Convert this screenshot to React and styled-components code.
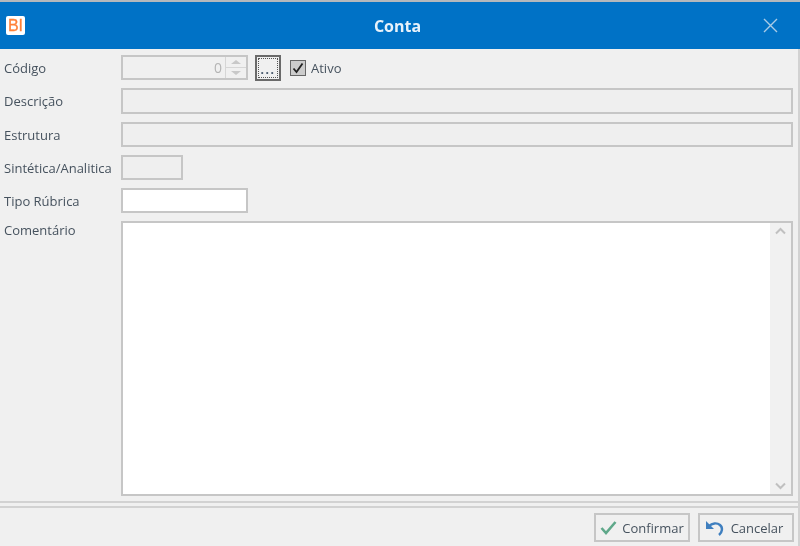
import styled, { createGlobalStyle } from 'styled-components';

const GlobalStyle = createGlobalStyle`
  html, body {
    margin: 0;
    padding: 0;
    background: #f0f0f0;
  }
`;

const Window = styled.div`
  width: 800px;
  height: 546px;
  display: flex;
  flex-direction: column;
  overflow: hidden;
  background: #f0f0f0;
  border-top: 2px solid #b4b8bc;
  box-sizing: border-box;
  font-family: 'Open Sans', 'Noto Sans', sans-serif;
  font-size: 13px;
  color: #46525e;
  filter: blur(0.5px);
`;

const TitleBar = styled.header`
  flex: none;
  height: 47px;
  display: flex;
  align-items: center;
  padding: 0 22px 0 6px;
  background: #0072c6;
`;

const AppLogo = styled.div`
  width: 19px;
  height: 19px;
  display: flex;
  align-items: center;
  justify-content: center;
  background: #fff;
  border-radius: 2px;
  color: #ff8038;
  font-family: 'Liberation Sans', sans-serif;
  font-size: 16px;
  -webkit-text-stroke: 0.3px #ff8038;
`;

const Title = styled.h1`
  flex: 1;
  margin: 0;
  padding-left: 7px;
  text-align: center;
  color: #e8f2fa;
  font-size: 16px;
  font-weight: 700;
  line-height: 20px;
`;

const CloseIcon = styled.svg`
  display: block;
  width: 15px;
  height: 15px;
  stroke: #a9cbe6;
  stroke-width: 1.4;
  fill: none;
`;

const Content = styled.div`
  flex: 1;
  min-height: 0;
  display: flex;
  flex-direction: column;
  border-right: 2px solid #d2d2d2;
`;

const Form = styled.main`
  flex: none;
  height: 452px;
  box-sizing: border-box;
  display: grid;
  grid-template-columns: 121px 1fr;
  grid-template-rows: 25px 26px 25px 25px 25px 1fr;
  gap: 8px 0;
  padding: 6px 5px 5px 0;
`;

const Label = styled.label`
  display: flex;
  align-items: ${(p) => (p.$top ? 'flex-start' : 'center')};
  padding-left: 4px;
  white-space: nowrap;
`;

const Row = styled.div`
  display: flex;
  align-items: center;
`;

const Field = styled.div`
  box-sizing: border-box;
  width: ${(p) => p.$width || '100%'};
  height: 100%;
  border: 2px solid #c6c6c6;
  background: ${(p) => (p.$white ? '#fff' : '#efefef')};
`;

const Spinner = styled.div`
  box-sizing: border-box;
  width: 127px;
  height: 100%;
  display: flex;
  border: 2px solid #c6c6c6;
`;

const SpinValue = styled.div`
  flex: 1;
  display: flex;
  align-items: center;
  justify-content: flex-end;
  padding-right: 3px;
  color: #b4b4b4;
  font-size: 14px;
`;

const SpinButtons = styled.div`
  width: 20px;
  display: flex;
  flex-direction: column;
  border-left: 1px solid #d6d6d6;
`;

const SpinArrow = styled.div`
  flex: 1;
  display: flex;
  align-items: center;
  justify-content: center;

  & + & {
    border-top: 1px solid #d6d6d6;
  }

  &::before {
    content: '';
    border-left: 5px solid transparent;
    border-right: 5px solid transparent;
    ${(p) => (p.$down ? 'border-top' : 'border-bottom')}: 4px solid #c8c8c8;
  }
`;

const BrowseButton = styled.button`
  box-sizing: border-box;
  width: 26px;
  height: 26px;
  margin-left: 7px;
  padding: 0;
  display: flex;
  align-items: flex-end;
  justify-content: center;
  border: 2px solid #6a6a6a;
  outline: 1px dotted #555;
  outline-offset: -4px;
  background: #f0f0f0;
  color: #44566a;
  font-family: inherit;
  font-size: 12px;
  font-weight: 700;
  line-height: 18px;
  letter-spacing: 1.5px;
`;

const CheckWrap = styled.div`
  display: flex;
  align-items: center;
  gap: 5px;
  margin-left: 9px;
`;

const CheckBox = styled.div`
  box-sizing: border-box;
  width: 16px;
  height: 16px;
  display: flex;
  align-items: center;
  justify-content: center;
  border: 1px solid #666;
  background: #cccccc;
`;

const CommentBox = styled.div`
  box-sizing: border-box;
  height: 100%;
  display: flex;
  justify-content: flex-end;
  border: 2px solid #c6c6c6;
  background: #fff;
`;

const ScrollBar = styled.div`
  width: 21px;
  display: flex;
  flex-direction: column;
  justify-content: space-between;
  align-items: center;
  padding: 4px 0;
  background: #f1f1f1;
`;

const ScrollIcon = styled.svg`
  display: block;
  width: 11px;
  height: 8px;
  stroke: #c0c0c0;
  stroke-width: 2;
  fill: none;
`;

const Separator = styled.hr`
  flex: none;
  box-sizing: border-box;
  width: 100%;
  height: 7px;
  margin: 0;
  border: solid #d2d2d2;
  border-width: 2px 0;
`;

const Footer = styled.footer`
  flex: none;
  display: flex;
  justify-content: flex-end;
  gap: 8px;
  padding: 5px 4px 0 0;
`;

const ActionButton = styled.button`
  box-sizing: border-box;
  width: 96px;
  height: 29px;
  display: flex;
  align-items: center;
  justify-content: center;
  gap: ${(p) => p.$gap};
  padding: 0 ${(p) => p.$inset || '0'} 0 0;
  border: 2px solid #c6c6c6;
  background: #f0f0f0;
  color: #46525e;
  font-family: inherit;
  font-size: 13px;
`;

export default function App() {
  return (
    <>
      <GlobalStyle />
      <Window>
        <TitleBar>
          <AppLogo>BI</AppLogo>
          <Title>Conta</Title>
          <CloseIcon viewBox="0 0 15 15">
            <path d="M1 1l13 13M14 1L1 14" />
          </CloseIcon>
        </TitleBar>
        <Content>
          <Form>
            <Label>Código</Label>
            <Row>
              <Spinner>
                <SpinValue>0</SpinValue>
                <SpinButtons>
                  <SpinArrow />
                  <SpinArrow $down />
                </SpinButtons>
              </Spinner>
              <BrowseButton>...</BrowseButton>
              <CheckWrap>
                <CheckBox>
                  <svg width="12" height="12" viewBox="0 0 12 12" fill="none" stroke="#222" strokeWidth="1.8">
                    <path d="M1.5 6.5l3 3.5 6-8.5" />
                  </svg>
                </CheckBox>
                Ativo
              </CheckWrap>
            </Row>
            <Label>Descrição</Label>
            <Field />
            <Label>Estrutura</Label>
            <Field />
            <Label>Sintética/Analitica</Label>
            <Field $width="62px" />
            <Label>Tipo Rúbrica</Label>
            <Field $width="127px" $white />
            <Label $top>Comentário</Label>
            <CommentBox>
              <ScrollBar>
                <ScrollIcon viewBox="0 0 11 8">
                  <path d="M1 6.5l4.5-4.5 4.5 4.5" />
                </ScrollIcon>
                <ScrollIcon viewBox="0 0 11 8">
                  <path d="M1 1.5l4.5 4.5 4.5-4.5" />
                </ScrollIcon>
              </ScrollBar>
            </CommentBox>
          </Form>
          <Separator />
          <Footer>
            <ActionButton $gap="5px">
              <svg width="17" height="15" viewBox="0 0 17 15" fill="none" stroke="#5fa88a" strokeWidth="2.6">
                <path d="M1.5 8l4.5 5L15.5 2" />
              </svg>
              Confirmar
            </ActionButton>
            <ActionButton $gap="7px" $inset="4px">
              <svg width="19" height="16" viewBox="0 0 19 16" fill="none">
                <path d="M1 1v8h8z" fill="#3f7fbf" />
                <path d="M4 6c3-3 8-3.500 11-1s2.500 7-1 10" stroke="#3f7fbf" strokeWidth="2.4" />
              </svg>
              Cancelar
            </ActionButton>
          </Footer>
        </Content>
      </Window>
    </>
  );
}
